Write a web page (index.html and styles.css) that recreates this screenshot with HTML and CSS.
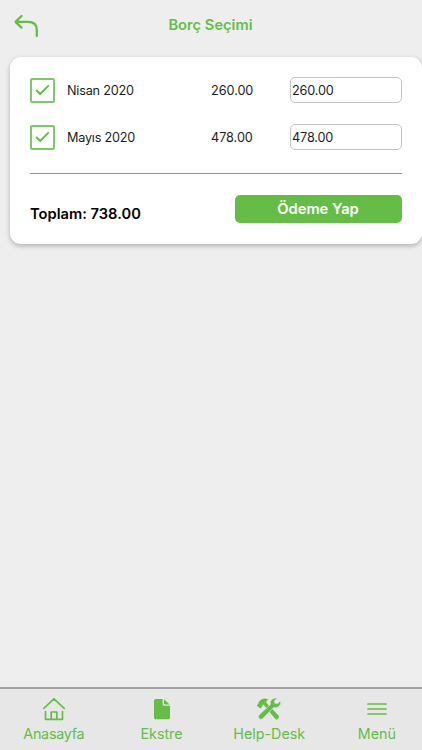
FILE: index.html
```html
<!DOCTYPE html>
<html lang="tr">
<head>
    <meta charset="UTF-8">
    <meta name="viewport" content="width=device-width, initial-scale=1.0">
    <title>Borç Seçimi</title>
    <link rel="stylesheet" href="styles.css">
</head>
<body>
    <header>
        <a class="back" href="#">
            <svg width="26" height="24" viewBox="0 0 26 24">
                <path d="M8.5 2 L2.5 7.8 L8.5 13.6 M3 7.8 H15 Q23.8 7.8 23.8 16 V22"/>
            </svg>
        </a>
        <h1>Borç Seçimi</h1>
    </header>

    <main class="card">
        <div class="row">
            <span class="check"><svg width="15" height="12" viewBox="0 0 15 12"><path d="M1.2 6 L5.2 10 L13.8 1.4"/></svg></span>
            <span class="month">Nisan 2020</span>
            <span class="amount">260.00</span>
            <input type="text" value="260.00">
        </div>
        <div class="row">
            <span class="check"><svg width="15" height="12" viewBox="0 0 15 12"><path d="M1.2 6 L5.2 10 L13.8 1.4"/></svg></span>
            <span class="month">Mayıs 2020</span>
            <span class="amount">478.00</span>
            <input type="text" value="478.00">
        </div>
        <div class="total">
            <strong>Toplam: 738.00</strong>
            <button>Ödeme Yap</button>
        </div>
    </main>

    <nav>
        <a href="#">
            <svg class="line" width="24" height="24" viewBox="0 0 24 24">
                <path d="M1.8 11.3 L12 1.8 L22.2 11.3 M3.5 14.5 V22.3 H20.5 V14.5 M9.2 22 V15 H14.8 V22"/>
            </svg>
            <span class="home">Anasayfa</span>
        </a>
        <a href="#">
            <svg width="24" height="24" viewBox="0 0 24 24">
                <path d="M12.6 2 V7 Q12.6 8.8 14.4 8.8 H20 V20.7 Q20 22.3 18.4 22.3 H5.6 Q4 22.3 4 20.7 V3.6 Q4 2 5.6 2 Z M14 2.3 L19.6 7.4 H14.8 Q14 7.4 14 6.6 Z"/>
            </svg>
            <span>Ekstre</span>
        </a>
        <a href="#">
            <svg width="26" height="24" viewBox="0 0 26 24">
                <path d="M.6 8.4 L4.2 11.6 L6.7 9 L6.4 8.2 L7.4 7.6 L19.1 21.8 Q20.3 23.1 21.5 21.9 L22.8 20.7 Q23.6 19.7 22.7 18.7 L10.5 6.1 Q9.5 4.2 12.4 2.6 Q7.5 .3 4.3 3.3 L2.4 5.4 L2.7 6.5 Z"/>
                <path class="wrench" d="M21.2 1.2 Q17.3 .4 15.1 3.1 Q13.7 5.1 14.4 7.4 L3 18.1 Q1.6 19.8 3.1 21.6 Q4.9 23.2 6.7 21.7 L17.6 10.6 Q20.6 11.4 23.1 9.3 Q25.4 7.1 24.5 3.7 L21.4 6.8 L18.9 6.3 L18.3 4.1 Z"/>
            </svg>
            <span>Help-Desk</span>
        </a>
        <a href="#">
            <svg class="line" width="24" height="24" viewBox="0 0 24 24">
                <path d="M3 7 H21 M3 12 H21 M3 17 H21"/>
            </svg>
            <span>Menü</span>
        </a>
    </nav>
</body>
</html>
```
FILE: styles.css
```css
* {
    box-sizing: border-box;
}
body {
    margin: 0;
    height: 100vh;
    display: flex;
    flex-direction: column;
    background: #eeeeee;
    font-family: Inter, 'Liberation Sans', sans-serif;
    color: #1c1c1c;
    overflow: hidden;
}
header {
    display: grid;
    grid-template-columns: 40px 1fr 40px;
    align-items: center;
    height: 57px;
    padding: 0 0 8px 13px;
}
.back {
    height: 22px;
}
.back svg {
    display: block;
}
.back path {
    fill: none;
    stroke: #65bd48;
    stroke-width: 2.3;
    stroke-linecap: round;
    stroke-linejoin: round;
}
h1 {
    margin: 0;
    padding-right: 14px;
    font-size: 14.7px;
    line-height: 20px;
    font-weight: 600;
    color: #65bd48;
    text-align: center;
}
.card {
    margin-left: 9.5px;
    height: 187px;
    padding: 9.5px 20.5px 0 20.5px;
    background: #ffffff;
    border-radius: 11px;
    box-shadow: 0 2px 5px rgba(0, 0, 0, 0.25);
}
.row {
    display: grid;
    grid-template-columns: 37px 144px 78.5px 1fr;
    align-items: center;
    height: 47px;
    font-size: 12.7px;
}
.month {
    letter-spacing: -0.22px;
}
.amount {
    letter-spacing: -0.05px;
}
.check {
    display: flex;
    align-items: center;
    justify-content: center;
    width: 25px;
    height: 25px;
    border: 2px solid #7fc767;
    border-radius: 2px;
}
.check path {
    fill: none;
    stroke: #65bd48;
    stroke-width: 2;
}
input {
    width: 100%;
    height: 26px;
    padding: 0 1.5px;
    border: 1px solid #c4c4c4;
    border-radius: 5px;
    background: #ffffff;
    font: inherit;
    letter-spacing: -0.15px;
    color: inherit;
}
.total {
    display: flex;
    justify-content: space-between;
    margin-top: 12px;
    padding-top: 21px;
    border-top: 1px solid #65bd48;
}
.total strong {
    padding-top: 9.5px;
    font-size: 14.7px;
    line-height: 20px;
    font-weight: 600;
    color: #000000;
}
button {
    width: 167px;
    height: 28px;
    padding: 1px 0 0;
    border: none;
    border-radius: 5px;
    background: #65bd48;
    color: #ffffff;
    font: 600 14.7px Inter, 'Liberation Sans', sans-serif;
}
nav {
    display: grid;
    grid-template-columns: repeat(4, 107.7px);
    margin-top: auto;
    height: 63px;
    border-top: 2px solid #a3a3a3;
    background: #e7e7e7;
}
nav a {
    display: flex;
    flex-direction: column;
    align-items: center;
    padding-top: 8px;
    font-size: 14.3px;
    line-height: 20px;
    color: #65bd48;
    text-decoration: none;
}
nav svg {
    margin-bottom: 3px;
    fill: #65bd48;
}
nav .line {
    fill: none;
    stroke: #65bd48;
    stroke-width: 1.7;
    stroke-linecap: round;
    stroke-linejoin: round;
}
.home {
    letter-spacing: -0.25px;
}
.wrench {
    stroke: #e7e7e7;
    stroke-width: 0.6;
}
```
